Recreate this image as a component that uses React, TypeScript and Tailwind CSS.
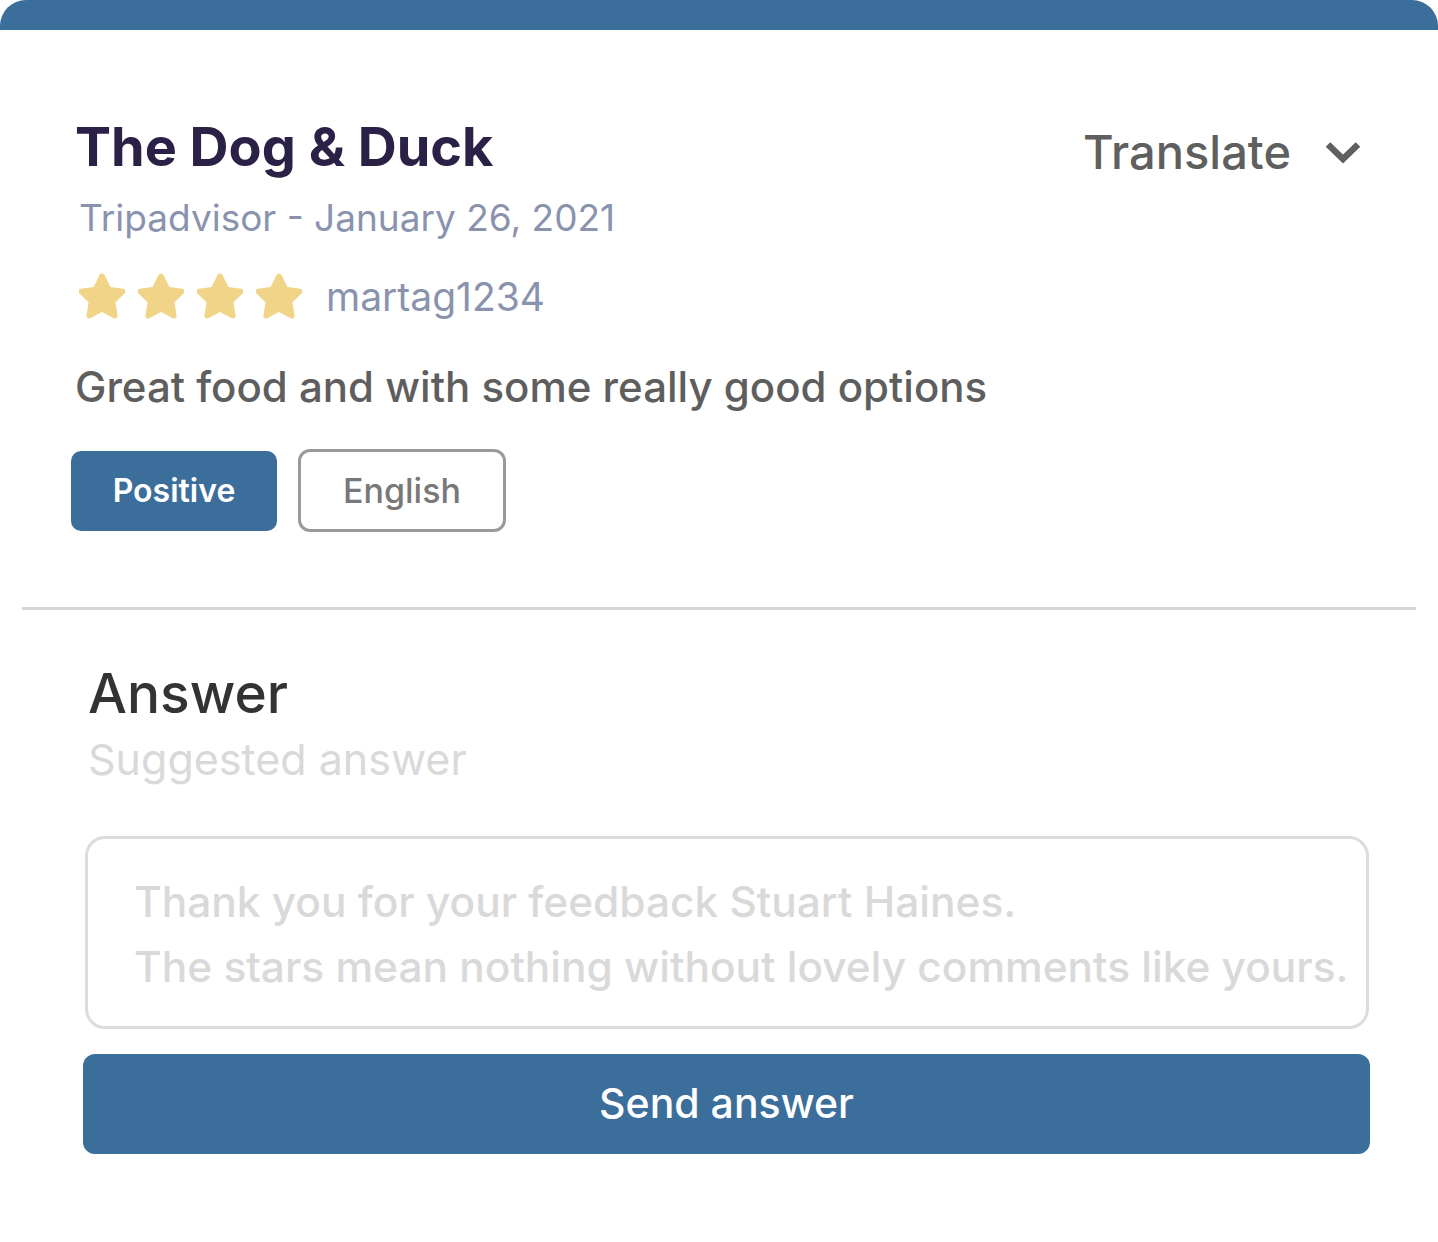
import React from 'react';

const Star = () => (
  <svg viewBox="2.4 2 19.2 19.2" className="w-[46px] h-[46px]">
    <path
      d="M12 2.2c.5 0 .9.3 1.1.7l2.4 4.9 5.4.8c.9.1 1.3 1.2.6 1.9l-3.9 3.8.9 5.4c.2.9-.8 1.6-1.6 1.2L12 18.3l-4.9 2.6c-.8.4-1.8-.3-1.6-1.2l.9-5.4-3.9-3.8c-.7-.7-.3-1.8.6-1.9l5.4-.8 2.4-4.9c.2-.4.6-.7 1.1-.7z"
      fill="#f2d488"
    />
  </svg>
);

const Chevron = () => (
  <svg viewBox="0 0 36 24" className="w-[36px] h-[24px]">
    <path d="M3 4.5 L18 19 L33 4.5" fill="none" stroke="#5f5f5f" strokeWidth="6.5" strokeLinejoin="miter" />
  </svg>
);

export default function App() {
  return (
    <div className="w-full min-h-screen bg-white font-['Inter',sans-serif]">
      {/* Card top bar */}
      <div className="h-[30px] bg-[#3c6e9b] rounded-t-[26px]" />

      {/* Review */}
      <div className="pl-[75px] pr-[77px]">
        <div className="flex justify-between items-start pt-[90px]">
          <h1 className="text-[54px] leading-none font-bold text-[#2b2045]">The Dog &amp; Duck</h1>
          <div className="flex items-center gap-[34px] mt-[8px]">
            <span className="text-[47px] leading-none font-medium text-[#5f5f5f]">Translate</span>
            <Chevron />
          </div>
        </div>

        <div className="mt-[24px] pl-[4px] text-[37px] leading-none text-[#8a93ae]">
          Tripadvisor - January 26, 2021
        </div>

        <div className="mt-[37px] flex items-center pl-[4px]">
          <div className="flex gap-[13px]">
            <Star />
            <Star />
            <Star />
            <Star />
          </div>
          <span className="ml-[24px] text-[39px] leading-none text-[#8a93ae]">martag1234</span>
        </div>

        <p className="mt-[47px] text-[42px] leading-none font-medium text-[#5e5e5e]">
          Great food and with some really good options
        </p>

        <div className="mt-[41px] flex items-center gap-[21px] -ml-[4px]">
          <span className="w-[206px] h-[80px] rounded-[10px] bg-[#3c6e9b] text-white text-[32px] font-semibold flex items-center justify-center">
            Positive
          </span>
          <span className="w-[208px] h-[83px] rounded-[12px] border-[3px] border-[#9a9a9a] text-[#787878] text-[34px] font-medium flex items-center justify-center">
            English
          </span>
        </div>
      </div>

      {/* Divider */}
      <div className="mt-[75px] mx-[22px] h-[3px] bg-[#d6d6d6]" />

      {/* Answer */}
      <div className="pl-[83px] pr-[68px]">
        <h2 className="mt-[56px] pl-[5px] text-[55px] leading-none font-medium text-[#333333]">Answer</h2>
        <div className="mt-[17px] pl-[5px] text-[43px] leading-none text-[#d9d9d9]">Suggested answer</div>

        <div className="mt-[55px] ml-[2px] mr-[1px] h-[193px] rounded-[20px] border-[3px] border-[#dcdcdc] pl-[46px] pt-[30px] text-[42.4px] leading-[65px] font-medium text-[#d9d9d9]">
          <div>Thank you for your feedback Stuart Haines.</div>
          <div>The stars mean nothing without lovely comments like yours.</div>
        </div>

        <button className="mt-[25px] w-full h-[100px] rounded-[12px] bg-[#3c6e9b] text-white text-[41px] font-medium flex items-center justify-center">
          Send answer
        </button>
      </div>
    </div>
  );
}
